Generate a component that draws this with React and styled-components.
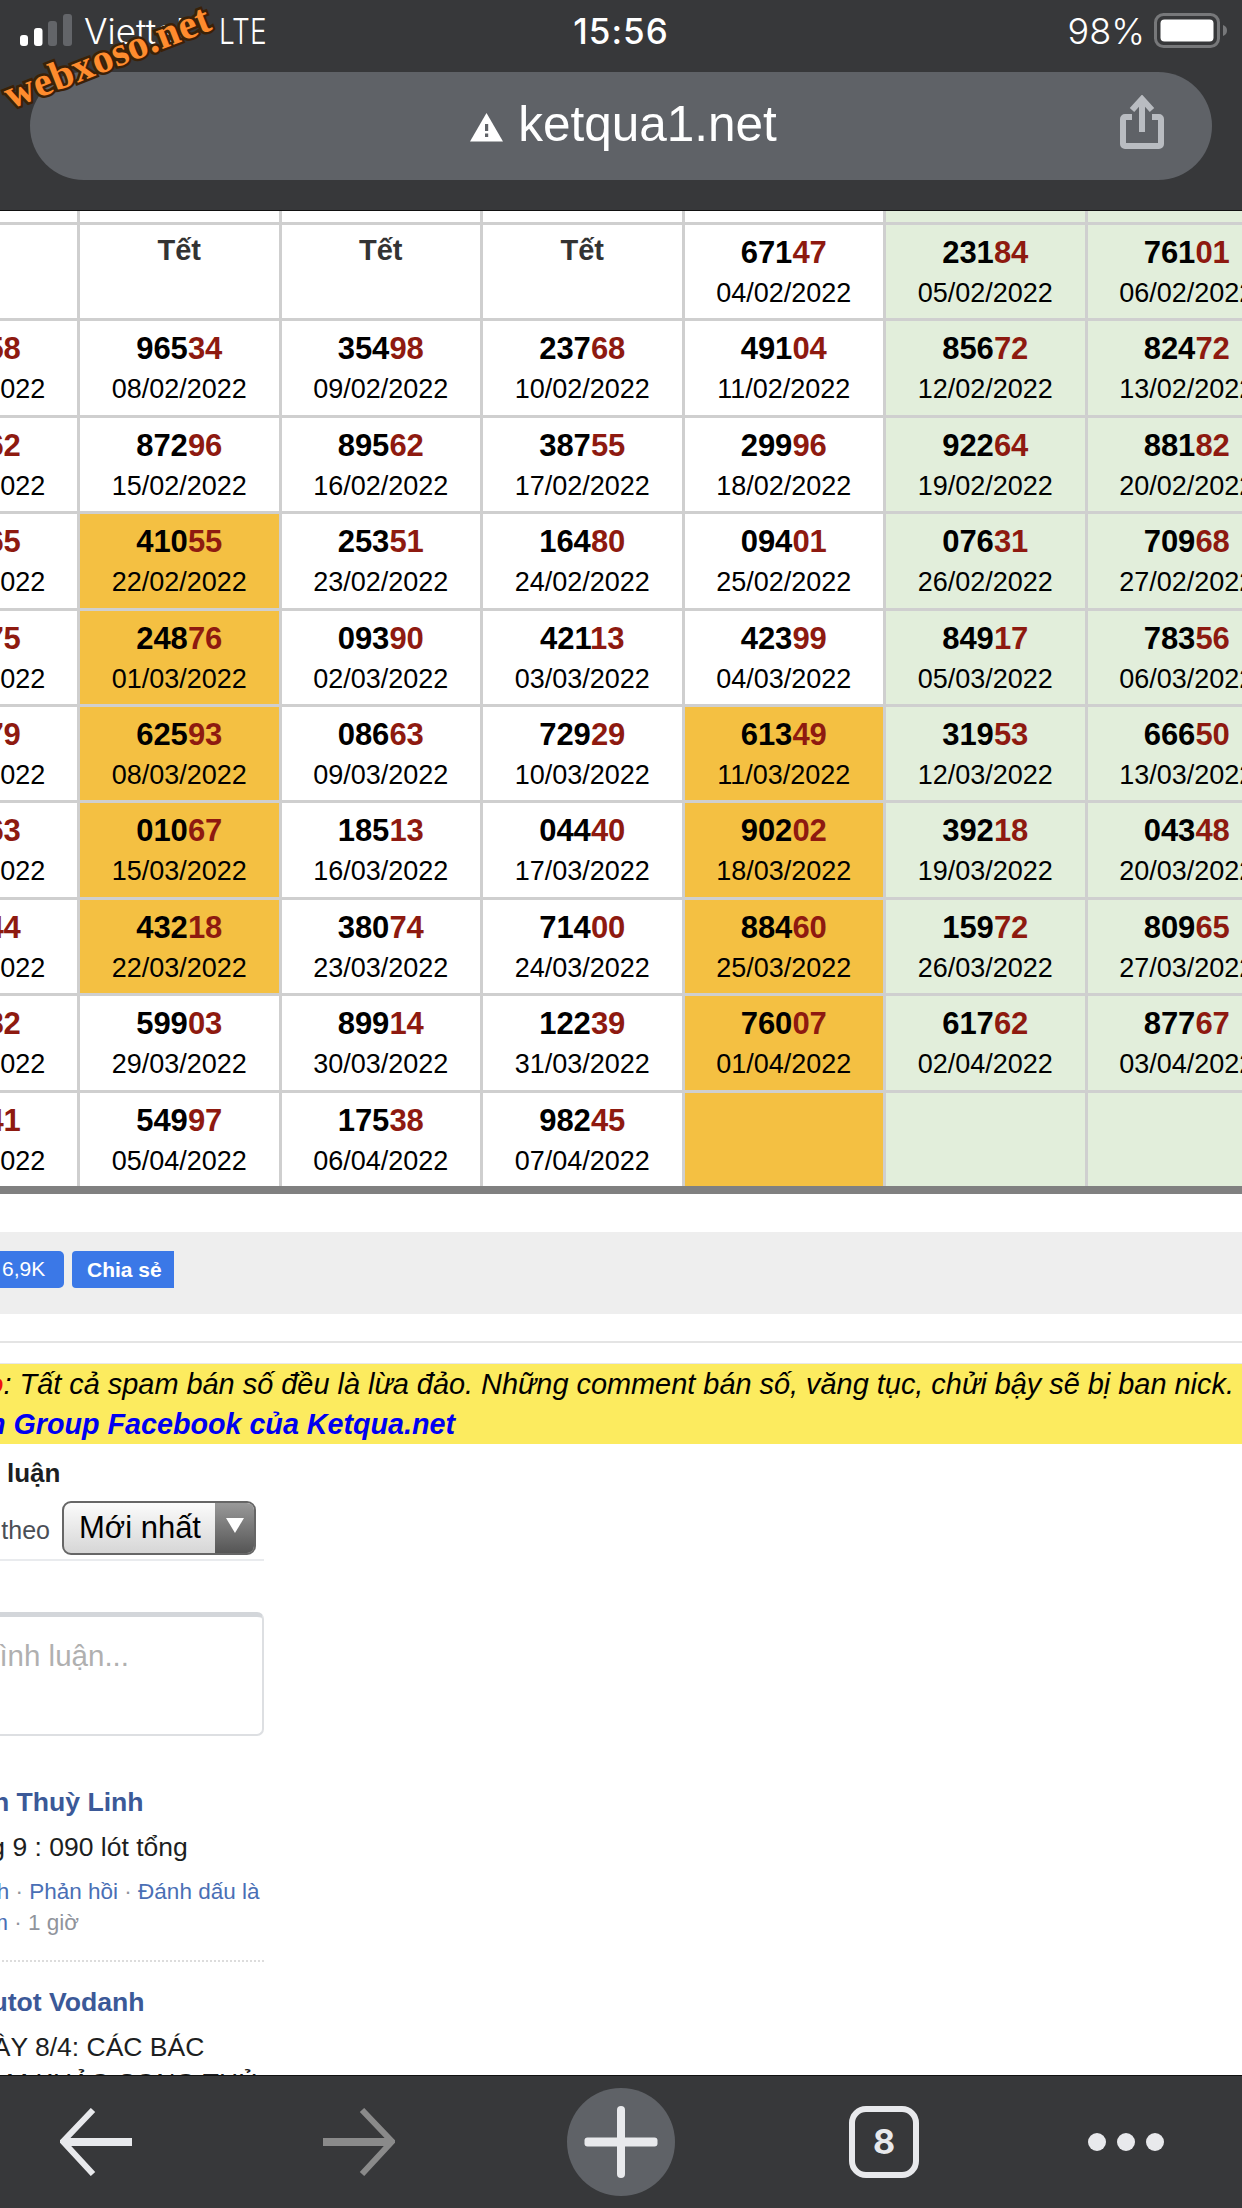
import React from "react";
import styled, { createGlobalStyle } from "styled-components";

const Global = createGlobalStyle`
  html, body { margin: 0; padding: 0; background: #fff; }
  body { font-family: "Liberation Sans", Arial, sans-serif; overflow: hidden; }
`;

const Phone = styled.div`
  position: relative;
  width: 1242px;
  height: 2208px;
  display: flex;
  flex-direction: column;
  overflow: hidden;
`;

const TopBar = styled.header`
  flex: none;
  height: 210px;
  background: #37383a;
  border-bottom: 1px solid #111;
  display: flex;
  flex-direction: column;
`;

const StatusRow = styled.div`
  height: 72px;
  padding: 0 14px 11px 14px;
  box-sizing: border-box;
  display: grid;
  grid-template-columns: 1fr auto 1fr;
  align-items: center;
  color: #fff;
  font-family: Inter, "Liberation Sans", sans-serif;
  font-size: 35px;
`;

const StatusLeft = styled.div`
  display: flex;
  align-items: center;
  font-weight: 300;
  padding-left: 6px;
`;

const Carrier = styled.span`
  margin-left: 12px;
  width: 135px;
  flex: none;
`;

const Lte = styled.span`
  display: inline-block;
  transform: scaleX(0.8);
  transform-origin: left center;
`;

const Clock = styled.div`
  font-weight: 500;
  letter-spacing: 1px;
`;

const StatusRight = styled.div`
  display: flex;
  justify-content: flex-end;
  align-items: center;
  gap: 9px;
  font-size: 36px;
  font-weight: 300;
`;

const UrlBar = styled.div`
  position: relative;
  height: 108px;
  margin: 0 30px;
  border-radius: 54px;
  background: #5f6267;
  display: flex;
  align-items: center;
  justify-content: center;
  gap: 15px;
  color: #fff;
  font-size: 49.5px;
  padding: 0 0 6px 5px;
  box-sizing: border-box;
`;

const ShareButton = styled.div`
  position: absolute;
  right: 48px;
  top: 23px;
  line-height: 0;
`;

const Main = styled.main`
  flex: 1;
  min-height: 0;
  overflow: hidden;
`;

const Scrolled = styled.div`
  margin-left: -121.5px;
  width: 1500px;
`;

const Table = styled.div`
  display: grid;
  grid-template-columns: repeat(7, 198.5px);
  grid-template-rows: 11px repeat(10, 93.4px);
  column-gap: 3px;
  row-gap: 3px;
  width: 1408px;
  background: #cfcfcf;
  border-bottom: 8px solid #808080;
  margin-bottom: 38px;
`;

const Cell = styled.div`
  background: ${(p) => (p.$kind === "hot" ? "#f4c042" : p.$kind === "weekend" ? "#e2eedb" : "#fff")};
  text-align: center;
  padding-top: 8px;
  box-sizing: border-box;
  overflow: hidden;
  color: #000;
`;

const Number = styled.div`
  font-size: 31px;
  font-weight: 700;
  line-height: 40px;
`;

const Tail = styled.span`
  color: #8e1a10;
`;

const DateText = styled.div`
  font-size: 27px;
  line-height: 40px;
`;

const Holiday = styled.div`
  font-size: 29px;
  font-weight: 700;
  line-height: 34px;
  color: #333;
`;

const ShareBand = styled.div`
  height: 82px;
  background: #eee;
  padding: 19px 0 0 119px;
  box-sizing: border-box;
  display: flex;
  gap: 8px;
  align-items: flex-start;
  width: 1364.5px;
`;

const CountButton = styled.div`
  height: 37px;
  line-height: 36px;
  padding: 0 14px 0 4.5px;
  width: 66.5px;
  box-sizing: border-box;
  background: #3b78e7;
  border-radius: 0 5px 5px 0;
  color: #fff;
  font-size: 21px;
`;

const ShareButtonLabel = styled.div`
  height: 37px;
  line-height: 37px;
  width: 102px;
  box-sizing: border-box;
  padding-left: 15px;
  background: #3b78e7;
  border-radius: 4px 0 0 4px;
  color: #fff;
  font-size: 21px;
  font-weight: 700;
`;

const Rule = styled.div`
  height: 2px;
  width: 1364.5px;
  background: #e4e4e4;
  margin: 27px 0 20px;
`;

const Notice = styled.div`
  width: 1364.5px;
  height: 81px;
  border-top: 1px solid #e8e8e8;
  box-sizing: border-box;
  background: #fceb5f;
  color: #000;
  line-height: 40px;
  font-style: italic;
`;

const NoticeLine = styled.div`
  display: flex;
  white-space: pre;
  font-size: ${(p) => (p.$bold ? 28.7 : 28.9)}px;
  font-weight: ${(p) => (p.$bold ? 700 : 400)};
  color: ${(p) => (p.$blue ? "#0000f0" : "#000")};
`;

const Prefix = styled.span`
  flex: none;
  width: ${(p) => p.$width}px;
  display: flex;
  justify-content: flex-end;
  white-space: pre;
`;

const Red = styled.span`
  color: #f01010;
  font-weight: 700;
`;

const Plugin = styled.section`
  width: 385.5px;
  color: #1c1e21;
`;

const PluginHeading = styled.h3`
  margin: 0;
  padding: 11px 0 0 63.5px;
  font-size: 26px;
  line-height: 36px;
  font-weight: 700;
`;

const SortRow = styled.div`
  margin-top: 10px;
  height: 58px;
  display: flex;
  justify-content: flex-end;
  align-items: flex-start;
  gap: 12px;
  padding-right: 8px;
  border-bottom: 2px solid #e9ebee;
  box-sizing: content-box;
  color: #4b4f56;
  font-size: 25px;
  line-height: 46px;
`;

const SortLabel = styled.span`
  padding-top: 6px;
`;

const FakeSelect = styled.div`
  width: 194px;
  height: 54px;
  box-sizing: border-box;
  border: 2px solid #666;
  border-radius: 9px;
  overflow: hidden;
  display: flex;
  background: linear-gradient(#fbfbfb, #d6d6d6);
`;

const SelectValue = styled.div`
  flex: 1;
  padding-left: 15px;
  color: #000;
  font-size: 31px;
  line-height: 50px;
`;

const SelectArrow = styled.div`
  width: 39px;
  background: linear-gradient(#999, #555);
  display: flex;
  align-items: center;
  justify-content: center;
`;

const Triangle = styled.div`
  width: 0;
  height: 0;
  border-left: 9px solid transparent;
  border-right: 9px solid transparent;
  border-top: 15px solid #fff;
  margin-top: -4px;
`;

const CommentInput = styled.div`
  margin-top: 51px;
  height: 124px;
  box-sizing: border-box;
  border: 2px solid #dddfe2;
  border-top: 5px solid #d3d6da;
  border-radius: 7px;
  padding: 21px 0 0 44px;
  color: #b0b0b0;
  font-size: 29.5px;
  line-height: 36px;
`;

const Comment = styled.article`
  padding: ${(p) => (p.$first ? "48px" : "0")} 0 0 74.5px;
`;

const AuthorName = styled.div`
  font-size: 26.6px;
  font-weight: 700;
  line-height: 36px;
  color: #3b5998;
`;

const CommentText = styled.div`
  font-size: 26.5px;
  line-height: 36px;
  margin-top: 9px;
  color: #1c1e21;
`;

const Meta = styled.div`
  margin-top: 11px;
  font-size: 22.5px;
  line-height: 31px;
  color: #90949c;
`;

const MetaLink = styled.span`
  color: #4a6fb5;
`;

const DotRule = styled.div`
  margin: 22px 0 22px;
  border-top: 2px dotted #dcdcdc;
`;

const BottomBar = styled.footer`
  flex: none;
  height: 133px;
  box-sizing: border-box;
  background: #37383a;
  border-top: 1px solid #111;
  display: flex;
  align-items: center;
  padding-left: 60px;
`;

const Tool = styled.div`
  flex: none;
  margin-left: ${(p) => p.$gap}px;
  line-height: 0;
  display: flex;
  align-items: center;
`;

const PlusCircle = styled.div`
  width: 108px;
  height: 108px;
  border-radius: 50%;
  background: #5f6267;
  display: flex;
  align-items: center;
  justify-content: center;
`;

const TabsBox = styled.div`
  width: 70px;
  height: 72px;
  box-sizing: border-box;
  border: 6px solid #e8e9ec;
  border-radius: 17px;
  color: #e8e9ec;
  font-family: Inter, "Liberation Sans", sans-serif;
  font-size: 34px;
  font-weight: 700;
  line-height: 60px;
  text-align: center;
`;

const Dots = styled.div`
  display: flex;
  gap: 11px;
`;

const Dot = styled.div`
  width: 18px;
  height: 18px;
  border-radius: 50%;
  background: #e8e9ec;
`;

const Watermark = styled.div`
  position: absolute;
  left: -4px;
  top: 36px;
  width: 222px;
  text-align: center;
  transform: rotate(-21.5deg);
  font-family: "Liberation Serif", serif;
  font-weight: 700;
  font-size: 41px;
  line-height: 40px;
  letter-spacing: 0.5px;
  color: #ff8c2e;
  -webkit-text-stroke: 5px #3a2108;
  paint-order: stroke fill;
  white-space: nowrap;
`;

const SignalBars = () => (
  <svg width="52" height="33" viewBox="0 0 52 33" style={{ flex: "none" }}>
    <rect x="0" y="21" width="8" height="11" rx="3" fill="#fff" />
    <rect x="14" y="14" width="8.5" height="18" rx="3" fill="#fff" />
    <rect x="28" y="7" width="9" height="25" rx="3" fill="#636569" />
    <rect x="43" y="0" width="9" height="32" rx="3" fill="#636569" />
  </svg>
);

const Battery = () => (
  <svg width="74" height="36" viewBox="0 0 74 36" style={{ flex: "none" }}>
    <rect x="1.5" y="1.5" width="63" height="32" rx="8" fill="none" stroke="#77787a" strokeWidth="3" />
    <rect x="6.5" y="6.5" width="53" height="22" rx="4" fill="#fff" />
    <path d="M69 12c3 1 4 3 4 5.500s-1 4.500-4 5.500z" fill="#77787a" />
  </svg>
);

const WarnIcon = () => (
  <svg width="33" height="29" viewBox="0 0 33 29" style={{ marginTop: 8 }}>
    <path d="M16.500 0 33 28.500H0z" fill="#fff" />
    <rect x="15" y="11" width="3.200" height="7" fill="#5f6267" />
    <rect x="15" y="20.500" width="3.200" height="3.500" fill="#5f6267" />
  </svg>
);

const ShareIcon = () => (
  <svg width="44" height="54" viewBox="0 0 44 54" fill="none" stroke="#b9bcc1" strokeWidth="6">
    <path d="M12 22H5a2 2 0 0 0-2 2v25a2 2 0 0 0 2 2h34a2 2 0 0 0 2-2V24a2 2 0 0 0-2-2h-7" />
    <path d="M22 37V4" />
    <path d="M12 15 22 4l10 11" />
  </svg>
);

const ArrowIcon = ({ flip, color }) => (
  <svg width="74" height="68" viewBox="0 0 74 68" style={flip ? { transform: "scaleX(-1)" } : undefined}>
    <path d="M33 2 3 33.500 33 66" fill="none" stroke={color} strokeWidth="6" />
    <rect x="4" y="30" width="68" height="8" fill={color} />
  </svg>
);

const PlusIcon = () => (
  <svg width="74" height="72" viewBox="0 0 74 72">
    <rect x="0.500" y="31.500" width="73" height="9" rx="3" fill="#e8e9ec" />
    <rect x="33" y="0" width="8" height="72" rx="4" fill="#e8e9ec" />
  </svg>
);

const rows = [
  ["", "T", "T", "T", "67147 04/02", "23184 05/02", "76101 06/02"],
  ["12358 07/02", "96534 08/02", "35498 09/02", "23768 10/02", "49104 11/02", "85672 12/02", "82472 13/02"],
  ["40162 14/02", "87296 15/02", "89562 16/02", "38755 17/02", "29996 18/02", "92264 19/02", "88182 20/02"],
  ["51365 21/02", "41055 22/02", "25351 23/02", "16480 24/02", "09401 25/02", "07631 26/02", "70968 27/02"],
  ["30875 28/02", "24876 01/03", "09390 02/03", "42113 03/03", "42399 04/03", "84917 05/03", "78356 06/03"],
  ["73279 07/03", "62593 08/03", "08663 09/03", "72929 10/03", "61349 11/03", "31953 12/03", "66650 13/03"],
  ["26163 14/03", "01067 15/03", "18513 16/03", "04440 17/03", "90202 18/03", "39218 19/03", "04348 20/03"],
  ["95444 21/03", "43218 22/03", "38074 23/03", "71400 24/03", "88460 25/03", "15972 26/03", "80965 27/03"],
  ["17382 28/03", "59903 29/03", "89914 30/03", "12239 31/03", "76007 01/04", "61762 02/04", "87767 03/04"],
  ["68441 04/04", "54997 05/04", "17538 06/04", "98245 07/04", "", "", ""],
];

const hot = new Set(["22/02", "01/03", "08/03", "15/03", "22/03", "11/03", "18/03", "25/03", "01/04"]);

const kindOf = (value, col, rowIndex) => {
  if (col >= 5) return "weekend";
  if (rowIndex === 9 && col === 4) return "hot";
  if (value && hot.has(value.split(" ")[1])) return "hot";
  return "plain";
};

const Result = ({ value, kind }) => {
  if (value === "T") return <Cell $kind={kind}><Holiday>Tết</Holiday></Cell>;
  if (!value) return <Cell $kind={kind} />;
  const [num, day] = value.split(" ");
  return (
    <Cell $kind={kind}>
      <Number>
        {num.slice(0, 3)}
        <Tail>{num.slice(3)}</Tail>
      </Number>
      <DateText>{day}/2022</DateText>
    </Cell>
  );
};

export default function App() {
  return (
    <Phone>
      <Global />
      <TopBar>
        <StatusRow>
          <StatusLeft>
            <SignalBars />
            <Carrier>Viettel</Carrier>
            <Lte>LTE</Lte>
          </StatusLeft>
          <Clock>15:56</Clock>
          <StatusRight>
            98%
            <Battery />
          </StatusRight>
        </StatusRow>
        <UrlBar>
          <WarnIcon />
          ketqua1.net
          <ShareButton>
            <ShareIcon />
          </ShareButton>
        </UrlBar>
      </TopBar>
      <Main>
        <Scrolled>
          <Table>
            {[0, 1, 2, 3, 4, 5, 6].map((c) => (
              <Cell key={c} $kind={c >= 5 ? "weekend" : "plain"} />
            ))}
            {rows.map((row, r) =>
              row.map((value, c) => (
                <Result key={`${r}-${c}`} value={value} kind={kindOf(value, c, r)} />
              ))
            )}
          </Table>
          <ShareBand>
            <CountButton>6,9K</CountButton>
            <ShareButtonLabel>Chia sẻ</ShareButtonLabel>
          </ShareBand>
          <Rule />
          <Notice>
            <NoticeLine>
              <Prefix $width={141}><Red>Cảnh báo</Red>:{"\u00a0"}</Prefix>
              Tất cả spam bán số đều là lừa đảo. Những comment bán số, văng tục, chửi bậy sẽ bị ban nick.
            </NoticeLine>
            <NoticeLine $bold $blue>
              <Prefix $width={135}>Nhóm tin{"\u00a0"}</Prefix>
              Group Facebook của Ketqua.net
            </NoticeLine>
          </Notice>
          <Plugin>
            <PluginHeading>Bình luận</PluginHeading>
            <SortRow>
              <SortLabel>Sắp xếp theo</SortLabel>
              <FakeSelect>
                <SelectValue>Mới nhất</SelectValue>
                <SelectArrow>
                  <Triangle />
                </SelectArrow>
              </FakeSelect>
            </SortRow>
            <CommentInput>Viết bình luận...</CommentInput>
            <Comment $first>
              <AuthorName>Trần Thuỳ Linh</AuthorName>
              <CommentText>Ưng 9 : 090 lót tổng</CommentText>
              <Meta>
                <MetaLink>Thích</MetaLink> · <MetaLink>Phản hồi</MetaLink> · <MetaLink>Đánh dấu là spam</MetaLink> · 1 giờ
              </Meta>
              <DotRule />
            </Comment>
            <Comment>
              <AuthorName>Mhutot Vodanh</AuthorName>
              <CommentText>NGÀY 8/4: CÁC BÁC THAM KHẢO SONG THỦ</CommentText>
            </Comment>
          </Plugin>
        </Scrolled>
      </Main>
      <BottomBar>
        <Tool $gap={0}><ArrowIcon color="#e8e9ec" /></Tool>
        <Tool $gap={187}><ArrowIcon flip color="#8a8a8a" /></Tool>
        <Tool $gap={172}>
          <PlusCircle><PlusIcon /></PlusCircle>
        </Tool>
        <Tool $gap={174}><TabsBox>8</TabsBox></Tool>
        <Tool $gap={169}>
          <Dots>
            <Dot />
            <Dot />
            <Dot />
          </Dots>
        </Tool>
      </BottomBar>
      <Watermark>webxoso.net</Watermark>
    </Phone>
  );
}
